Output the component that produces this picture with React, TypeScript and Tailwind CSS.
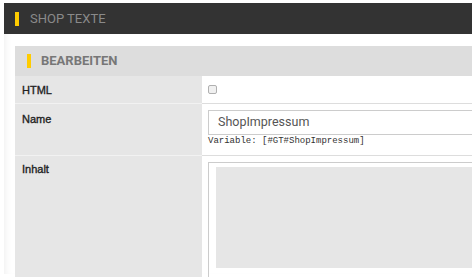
export default function App() {
    return (
        <div className="w-[472px] h-[277px] overflow-hidden bg-white pt-[3px] pl-[4px]">
            <div className="h-[31px] bg-[#333333] flex items-center">
                <span className="ml-[11px] w-[4px] h-[14px] bg-[#ffcc00]" />
                <span className="ml-[11px] text-[13px] text-[#8a8a8a] uppercase font-['Roboto',sans-serif]">
                    Shop Texte
                </span>
            </div>

            <div className="h-[240px] pl-[11px] pt-[12px] shadow-[inset_6px_0_6px_-4px_rgba(0,0,0,0.06)]">
                <div className="h-[30px] bg-[#dddddd] flex items-center">
                    <span className="ml-[12px] w-[4px] h-[14px] bg-[#ffcc00]" />
                    <span className="ml-[10px] text-[13px] font-bold text-[#777777] uppercase font-['Roboto',sans-serif]">
                        Bearbeiten
                    </span>
                </div>

                <div className="grid grid-cols-[187px_290px] font-['Liberation_Sans',Arial,sans-serif] overflow-hidden">
                    <div className="h-[28px] bg-[#e6e6e6] border-b border-[#f2f2f2] flex items-center pl-[7px] pt-[1px] text-[11px] text-[#222] [-webkit-text-stroke:0.35px_#222]">
                        HTML
                    </div>
                    <div className="h-[28px] border-b border-[#dddddd] flex items-center pl-[6px]">
                        <span className="w-[9px] h-[9px] rounded-[2px] border border-[#b0b0b0] bg-[#f0f0f0]" />
                    </div>

                    <div className="h-[52px] bg-[#e6e6e6] border-b border-[#f2f2f2] pl-[7px] pt-[7px] text-[11px] text-[#222] [-webkit-text-stroke:0.35px_#222]">
                        Name
                    </div>
                    <div className="h-[52px] border-b border-[#dddddd] pl-[6px] pt-[6px]">
                        <div className="w-[300px] h-[25px] border border-[#cccccc] flex items-center pl-[9px] text-[12.5px] text-[#555] font-['Roboto',sans-serif]">
                            ShopImpressum
                        </div>
                        <div className="text-[9px] leading-[12px] text-[#333] font-['Liberation_Mono',monospace]">
                            Variable: [#GT#ShopImpressum]
                        </div>
                    </div>

                    <div className="h-[130px] bg-[#e6e6e6] pl-[7px] pt-[5px] text-[11px] text-[#222] [-webkit-text-stroke:0.35px_#222]">
                        Inhalt
                    </div>
                    <div className="h-[130px] pl-[6px] pt-[6px]">
                        <div className="w-[300px] h-full border-l border-t border-[#cccccc] pl-[7px] pt-[4px]">
                            <div className="h-[101px] bg-[#e6e6e6]" />
                        </div>
                    </div>
                </div>
            </div>
        </div>
    );
}
